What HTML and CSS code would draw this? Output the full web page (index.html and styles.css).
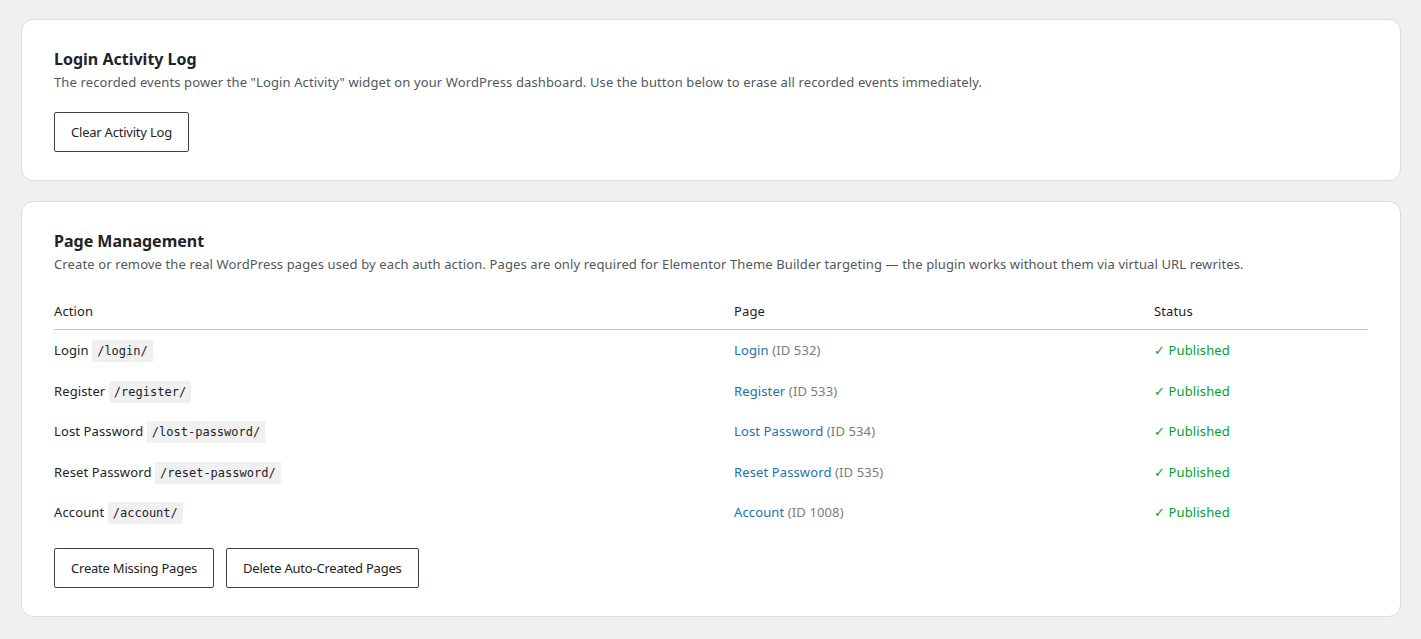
FILE: index.html
```html
<!DOCTYPE html>
<html lang="en">
<head>
  <meta charset="UTF-8" />
  <title>Auth Settings</title>
  <link rel="stylesheet" href="styles.css">
</head>
<body>
  <div class="wrap">
    <div class="card">
      <h2>Login Activity Log</h2>
      <p class="desc">The recorded events power the "Login Activity" widget on your WordPress dashboard. Use the button below to erase all recorded events immediately.</p>
      <div class="actions">
        <button class="btn">Clear Activity Log</button>
      </div>
    </div>

    <div class="card">
      <h2>Page Management</h2>
      <p class="desc">Create or remove the real WordPress pages used by each auth action. Pages are only required for Elementor Theme Builder targeting — the plugin works without them via virtual URL rewrites.</p>
      <table class="pages">
        <thead>
          <tr>
            <th class="col-action">Action</th>
            <th class="col-page">Page</th>
            <th>Status</th>
          </tr>
        </thead>
        <tbody>
          <tr>
            <td>Login <code>/login/</code></td>
            <td><a href="#">Login</a> <span class="id">(ID 532)</span></td>
            <td class="ok">✓ Published</td>
          </tr>
          <tr>
            <td>Register <code>/register/</code></td>
            <td><a href="#">Register</a> <span class="id">(ID 533)</span></td>
            <td class="ok">✓ Published</td>
          </tr>
          <tr>
            <td>Lost Password <code>/lost-password/</code></td>
            <td><a href="#">Lost Password</a> <span class="id">(ID 534)</span></td>
            <td class="ok">✓ Published</td>
          </tr>
          <tr>
            <td>Reset Password <code>/reset-password/</code></td>
            <td><a href="#">Reset Password</a> <span class="id">(ID 535)</span></td>
            <td class="ok">✓ Published</td>
          </tr>
          <tr>
            <td>Account <code>/account/</code></td>
            <td><a href="#">Account</a> <span class="id">(ID 1008)</span></td>
            <td class="ok">✓ Published</td>
          </tr>
        </tbody>
      </table>
      <div class="actions tight">
        <button class="btn">Create Missing Pages</button>
        <button class="btn">Delete Auto-Created Pages</button>
      </div>
    </div>
  </div>
</body>
</html>
```

FILE: styles.css
```css
body {
  margin: 0;
  background: #f0f0f1;
  font-family: "Noto Sans", "Open Sans", sans-serif;
  font-size: 13px;
  letter-spacing: 0.12px;
  color: #1d2327;
}
.wrap {
  padding: 19px 20px 22px 21px;
  display: flex;
  flex-direction: column;
  gap: 20px;
}
.card {
  background: #fff;
  border: 1px solid #dcdcde;
  border-radius: 12px;
  padding: 28px 32px 28px 32px;
}
h2 {
  margin: 0;
  font-size: 16px;
  font-weight: 700;
  line-height: 22px;
  letter-spacing: 0;
  color: #1d2327;
}
.desc {
  margin: 2px 0 0;
  color: #50575e;
  line-height: 20px;
}
.actions {
  display: flex;
  gap: 12px;
  margin-top: 20px;
}
.actions.tight {
  margin-top: 15px;
}
.btn {
  height: 40px;
  padding: 0 16px;
  background: #fff;
  border: 1px solid #3c434a;
  border-radius: 2px;
  font-family: inherit;
  font-size: 13px;
  font-weight: 400;
  letter-spacing: -0.22px;
  color: #1d2327;
  cursor: pointer;
}
.pages {
  width: 100%;
  border-collapse: collapse;
  margin-top: 27px;
}
.pages th {
  text-align: left;
  font-weight: 400;
  color: #1d2327;
  padding: 0 0 8px;
  border-bottom: 1px solid #c3c4c7;
  line-height: 20px;
}
.col-action { width: 680px; }
.col-page { width: 420px; }
.pages td {
  padding: 10px 0 10.5px;
  line-height: 20px;
}
code {
  font-family: "DejaVu Sans Mono", monospace;
  font-size: 12px;
  line-height: 1;
  letter-spacing: 0;
  color: #1d2327;
  background: #f0f0f1;
  padding: 4px 5px;
}
a {
  color: #2271b1;
  text-decoration: none;
}
.id {
  color: #787c82;
}
.ok {
  color: #00a32a;
}
```
